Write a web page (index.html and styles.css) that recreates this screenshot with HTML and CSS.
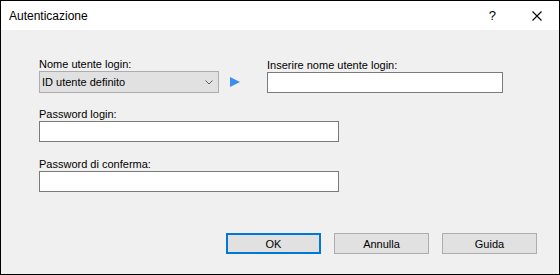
FILE: index.html
```html
<!DOCTYPE html>
<html lang="it">
<head>
    <meta charset="UTF-8">
    <title>Autenticazione</title>
    <link rel="stylesheet" href="styles.css">
</head>
<body>
    <div class="window">
        <div class="titlebar">
            <span class="title">Autenticazione</span>
            <span class="help">?</span>
            <span class="close">
                <svg width="10" height="10" viewBox="0 0 10 10">
                    <path d="M0.5 0.5 L9.5 9.5 M9.5 0.5 L0.5 9.5" stroke="#000" stroke-width="1.1" fill="none"/>
                </svg>
            </span>
        </div>

        <div class="content">
            <div class="top-row">
                <div class="field combo-field">
                    <label>Nome utente login:</label>
                    <div class="combo">
                        <span>ID utente definito</span>
                        <svg class="chevron" width="8" height="5" viewBox="0 0 8 5">
                            <path d="M0.5 0.5 L4 4 L7.5 0.5" stroke="#606060" stroke-width="1" fill="none"/>
                        </svg>
                    </div>
                </div>
                <svg class="arrow" width="10" height="10" viewBox="0 0 10 10">
                    <path d="M0 0 L10 5 L0 10 Z" fill="#3b8eea"/>
                </svg>
                <div class="field user-field">
                    <label for="username">Inserire nome utente login:</label>
                    <input type="text" id="username">
                </div>
            </div>

            <div class="field pw-field first">
                <label for="password">Password login:</label>
                <input type="password" id="password">
            </div>

            <div class="field pw-field">
                <label for="confirm">Password di conferma:</label>
                <input type="password" id="confirm">
            </div>

            <div class="buttons">
                <button class="default">OK</button>
                <button>Annulla</button>
                <button>Guida</button>
            </div>
        </div>
    </div>
</body>
</html>
```

FILE: styles.css
```css
body {
    margin: 0;
    font-family: 'Liberation Sans', Arial, sans-serif;
    font-size: 11px;
    color: #000;
}
.window {
    width: 560px;
    height: 275px;
    box-sizing: border-box;
    border: 1px solid #000;
    background-color: #f0f0f0;
    display: flex;
    flex-direction: column;
}
.titlebar {
    height: 29px;
    background-color: #fff;
    display: flex;
    align-items: center;
    font-size: 12px;
}
.title {
    padding-left: 8px;
    flex: 1;
}
.help {
    font-size: 13px;
    margin-right: 36px;
}
.close {
    display: flex;
    margin-right: 17px;
}
.content {
    flex: 1;
    padding: 27px 22px 0 38px;
}
label {
    display: block;
    line-height: 14px;
}
.top-row {
    display: flex;
    align-items: flex-end;
}
.combo-field {
    width: 180px;
}
.combo {
    height: 22px;
    box-sizing: border-box;
    border: 1px solid #adadad;
    background-color: #e1e1e1;
    display: flex;
    align-items: center;
    justify-content: space-between;
    padding: 0 5px 1px 2px;
}
.chevron {
    margin-top: 1px;
}
.arrow {
    margin: 0 0 6px 11px;
}
.user-field {
    margin-left: 27px;
    width: 236px;
}
input {
    display: block;
    width: 100%;
    height: 21px;
    box-sizing: border-box;
    border: 1px solid #7a7a7a;
    background-color: #fff;
    margin: 0;
    padding: 0 3px;
    font: inherit;
}
.pw-field {
    width: 300px;
    margin-top: 15px;
}
.pw-field.first {
    margin-top: 14px;
}
.buttons {
    display: flex;
    justify-content: flex-end;
    gap: 13px;
    margin-top: 41px;
}
button {
    width: 95px;
    height: 21px;
    box-sizing: border-box;
    border: 1px solid #adadad;
    background-color: #e1e1e1;
    font: inherit;
    color: #000;
    padding: 0;
}
button.default {
    border: 2px solid #0078d7;
}
```
